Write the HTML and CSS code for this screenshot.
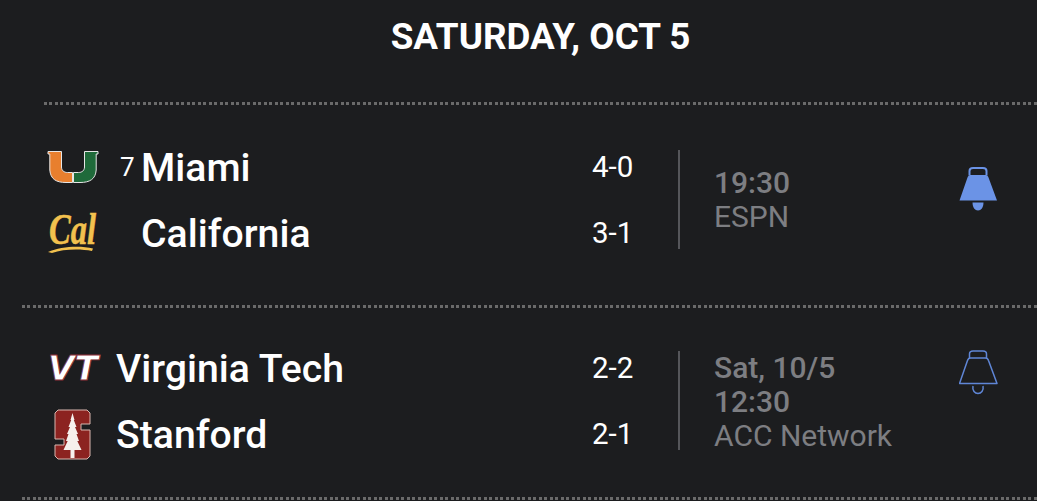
FILE: index.html
```html
<!DOCTYPE html>
<html lang="en">
<head>
<meta charset="utf-8">
<title>Saturday, Oct 5</title>
<link rel="stylesheet" href="styles.css">
</head>
<body>
<main class="page">
  <h1 class="day">SATURDAY, OCT 5</h1>
  <div class="rule rule-inset"></div>
  <section class="game game-first">
    <div class="teams">
      <div class="team">
        <svg class="logo" width="52" height="34" viewBox="0 0 52 34">
          <path d="M1 1.500H14.500V17C14.500 20.500 17 22.500 20.500 22.500H25.500V32.500H19C9 32.500 3.500 29 2.800 20V4H1Z" fill="#e87f2e" stroke="#e6e6e6" stroke-width="1"/>
          <path d="M51 1.500H37.500V17C37.500 20.500 35 22.500 31.500 22.500H26.500V32.500H33C43 32.500 48.500 29 49.200 20V4H51Z" fill="#1f6a3a" stroke="#e6e6e6" stroke-width="1"/>
        </svg>
        <span class="rank">7</span>
        <span class="name">Miami</span>
        <span class="record">4-0</span>
      </div>
      <div class="team">
        <svg class="logo" width="52" height="44" viewBox="0 0 52 44">
          <text class="cal-mark" x="2" y="33" textLength="47" lengthAdjust="spacingAndGlyphs">Cal</text>
          <path d="M1 41C14 35 34 34.500 46 37.500L45 40C33 37.500 16 38 5 42Z" fill="#f2c14e"/>
        </svg>
        <span class="rank"></span>
        <span class="name">California</span>
        <span class="record">3-1</span>
      </div>
    </div>
    <div class="info">
      <span class="time">19:30</span>
      <span class="net">ESPN</span>
    </div>
    <svg class="bell bell-first" width="40" height="46" viewBox="0 0 40 46">
      <path d="M10.500 9.500V5C10.500 3 12 2 14 2H24C26 2 27.500 3 27.500 5V9.500" fill="none" stroke="#6b93e6" stroke-width="2"/>
      <path d="M11.500 9H26.500C28 9 29 10 29.500 11.500L38 34.500H0.500L8.500 11.500C9 10 10 9 11.500 9Z" fill="#6b93e6"/>
      <path d="M13.500 36.500H24.500C24.500 41.500 22 44.500 19 44.500C16 44.500 13.500 41.500 13.500 36.500Z" fill="#6b93e6"/>
    </svg>
  </section>
  <div class="rule"></div>
  <section class="game game-second">
    <div class="teams">
      <div class="team team-norank">
        <svg class="logo" width="52" height="28" viewBox="0 0 52 28">
          <text class="vt-mark" x="1" y="25" textLength="50" lengthAdjust="spacingAndGlyphs">VT</text>
        </svg>
        <span class="name">Virginia Tech</span>
        <span class="record">2-2</span>
      </div>
      <div class="team team-norank">
        <svg class="logo" width="52" height="52" viewBox="0 0 52 52">
          <path d="M11 1H40L43 4V15H34V21H43V47L40 50H11L8 47V36H17V30H8V4Z" fill="#8c2320" stroke="#d8b8b0" stroke-width="1"/>
          <path d="M25.500 4L27.500 11H26.800L29.500 18H28L31 25H29.500L32 32H30.300L34.500 41H27.500V49H23.500V41H16.500L20.700 32H19L21.500 25H20L23 18H21.500L24.200 11H23.500Z" fill="#f6f0ec"/>
        </svg>
        <span class="name">Stanford</span>
        <span class="record">2-1</span>
      </div>
    </div>
    <div class="info">
      <span class="time">Sat, 10/5</span>
      <span class="time">12:30</span>
      <span class="net">ACC Network</span>
    </div>
    <svg class="bell bell-second" width="40" height="46" viewBox="0 0 40 46">
      <path d="M10.500 9.500V5C10.500 3 12 2 14 2H24C26 2 27.500 3 27.500 5V9.500" fill="none" stroke="#5f86d6" stroke-width="1.500"/>
      <path d="M11.500 9H26.500C28 9 29 10 29.500 11.500L38 34.500H0.500L8.500 11.500C9 10 10 9 11.500 9Z" fill="none" stroke="#5f86d6" stroke-width="1.500" stroke-linejoin="round"/>
      <path d="M14 37C13 41.500 16 44.500 19 44.500C22 44.500 25 41.500 24 37" fill="none" stroke="#5f86d6" stroke-width="1.500"/>
    </svg>
  </section>
  <div class="rule"></div>
</main>
</body>
</html>
```
FILE: styles.css
```css
* { box-sizing: border-box; }
html, body { margin: 0; height: 100%; }
body {
  background: #1c1d1f;
  color: #fff;
  font-family: Roboto, "Noto Sans", sans-serif;
  overflow: hidden;
}
.page { width: 1037px; }
.day {
  margin: 0 0 0 44px;
  height: 102px;
  padding-top: 15px;
  font-size: 36.800px;
  line-height: 44px;
  font-weight: 700;
  text-align: center;
}
.rule {
  height: 3px;
  margin-left: 22px;
  background: repeating-linear-gradient(90deg, #6a6a6a 0 3px, transparent 3px 5.5px);
}
.rule-inset { margin-left: 44px; }
.game {
  display: flex;
  align-items: center;
  height: 200px;
  padding-left: 44px;
}
.game-first { padding-bottom: 12px; }
.game-second { height: 189px; padding-bottom: 4px; }
.teams {
  display: flex;
  flex-direction: column;
  flex: none;
  width: 636px;
  border-right: 2px solid #55565a;
  height: 99px;
  justify-content: space-between;
}
.team {
  display: flex;
  align-items: center;
  height: 33px;
  padding-top: 2px;
}
.logo { flex: none; margin-left: 3px; width: 52px; overflow: visible; }
.rank {
  width: 42px;
  padding-left: 21px;
  font-size: 26px;
  flex: none;
  line-height: 33px;
}
.team-norank .name { margin-left: 17px; }
.name {
  font-size: 39.200px;
  font-weight: 500;
  line-height: 33px;
  padding-top: 2px;
  flex: 1;
}
.record {
  width: 86px;
  font-size: 29.500px;
  line-height: 33px;
  flex: none;
}
.info {
  display: flex;
  flex-direction: column;
  flex: none;
  width: 279px;
  padding-left: 34px;
  margin-top: 2px;
  color: #7d7e82;
  font-size: 30px;
  line-height: 34px;
}
.time { font-weight: 500; }
.bell { flex: none; }
.bell-first { margin-bottom: 21px; }
.bell-second { margin-bottom: 58px; }
.cal-mark {
  font-family: "Liberation Serif", serif;
  font-style: italic;
  font-weight: 700;
  font-size: 45px;
  fill: #f2c14e;
  stroke: #f2c14e;
  stroke-width: 0.500px;
}
.vt-mark {
  font-family: "DejaVu Sans", sans-serif;
  font-style: oblique;
  font-weight: 700;
  font-size: 33px;
  fill: #fff;
  stroke: #8c2f39;
  stroke-width: 0.800px;
}
```
